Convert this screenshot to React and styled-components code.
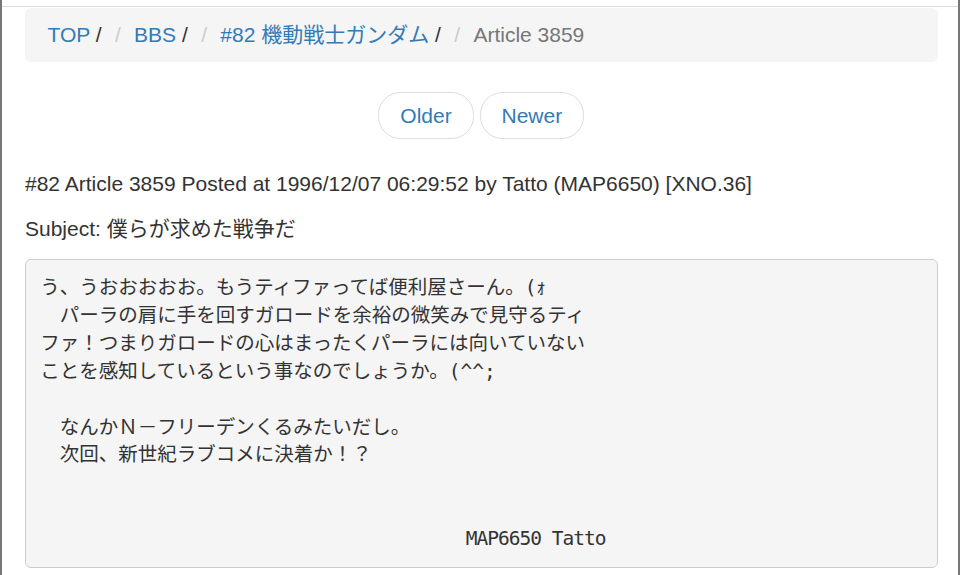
import React from 'react';
import styled, { createGlobalStyle } from 'styled-components';

const GlobalStyle = createGlobalStyle`
  html, body {
    margin: 0;
    padding: 0;
    background: #fff;
  }
  body {
    font-family: "Liberation Sans", Arial, "Noto Sans CJK JP", sans-serif;
    font-size: 21px;
    line-height: 30px;
    color: #333;
  }
`;

const Frame = styled.div`
  min-height: 575px;
  box-sizing: border-box;
  border-left: 2px solid #777;
  border-right: 2.5px solid #777;
  padding-top: 5.5px;
`;

const TopRule = styled.div`
  height: 1px;
  background: #ddd;
`;

const Container = styled.div`
  padding: 1.5px 20.5px 0 23px;
`;

const Breadcrumb = styled.ol`
  list-style: none;
  margin: 0 0 30px;
  padding: 12px 22.5px;
  background: #f5f5f5;
  border-radius: 6px;
`;

const Crumb = styled.li`
  display: inline-block;
  color: ${p => (p.$active ? '#777' : '#333')};

  li + &:before {
    content: "/\\00a0";
    padding: 0 7.5px;
    color: #ccc;
  }
`;

const Link = styled.a`
  color: #337ab7;
  text-decoration: none;
`;

const Pager = styled.ul`
  list-style: none;
  margin: 0 0 30px;
  padding: 0;
  text-align: center;
`;

const PagerItem = styled.li`
  display: inline;
`;

const PagerLink = styled.a`
  display: inline-block;
  padding: 7.5px 21px;
  background: #fff;
  border: 1px solid #ddd;
  border-radius: 22.5px;
  color: #337ab7;
  text-decoration: none;
`;

const Line = styled.div`
  margin: 0 0 15px;
`;

const Pre = styled.pre`
  margin: 0;
  padding: 14.25px;
  font-family: "DejaVu Sans Mono", "Liberation Mono", "Noto Sans CJK JP", monospace;
  font-size: 19.5px;
  line-height: 27.86px;
  color: #333;
  background: #f5f5f5;
  border: 1px solid #ccc;
  border-radius: 6px;
  white-space: pre-wrap;
  word-break: break-all;
`;

// the reference's mono face is narrower than DejaVu, so tighten the signature line
const Signature = styled.span`
  letter-spacing: -1px;
`;

const body = [
  'う、うおおおおお。もうティファってば便利屋さーん。(ｫ',
  '　パーラの肩に手を回すガロードを余裕の微笑みで見守るティ',
  'ファ！つまりガロードの心はまったくパーラには向いていない',
  'ことを感知しているという事なのでしょうか。(^^;',
  '',
  '　なんかＮ－フリーデンくるみたいだし。',
  '　次回、新世紀ラブコメに決着か！？',
  '',
  '',
  '',
].join('\n');

const App = () => {
  return (
    <>
      <GlobalStyle />
      <Frame>
        <TopRule />
        <Container>
          <Breadcrumb>
            <Crumb><Link href="#">TOP</Link> /</Crumb>{' '}
            <Crumb><Link href="#">BBS</Link> /</Crumb>{' '}
            <Crumb><Link href="#">#82 機動戦士ガンダム</Link> /</Crumb>{' '}
            <Crumb $active>Article 3859</Crumb>
          </Breadcrumb>
          <Pager>
            <PagerItem><PagerLink href="#">Older</PagerLink></PagerItem>{' '}
            <PagerItem><PagerLink href="#">Newer</PagerLink></PagerItem>
          </Pager>
          <Line>#82 Article 3859 Posted at 1996/12/07 06:29:52 by Tatto (MAP6650) [XNO.36]</Line>
          <Line>Subject: 僕らが求めた戦争だ</Line>
          <Pre>{body}<Signature>{'　　　　　　　　　　　　　　　　　　　　　　　MAP6650 Tatto'}</Signature></Pre>
        </Container>
      </Frame>
    </>
  );
};

export default App;
